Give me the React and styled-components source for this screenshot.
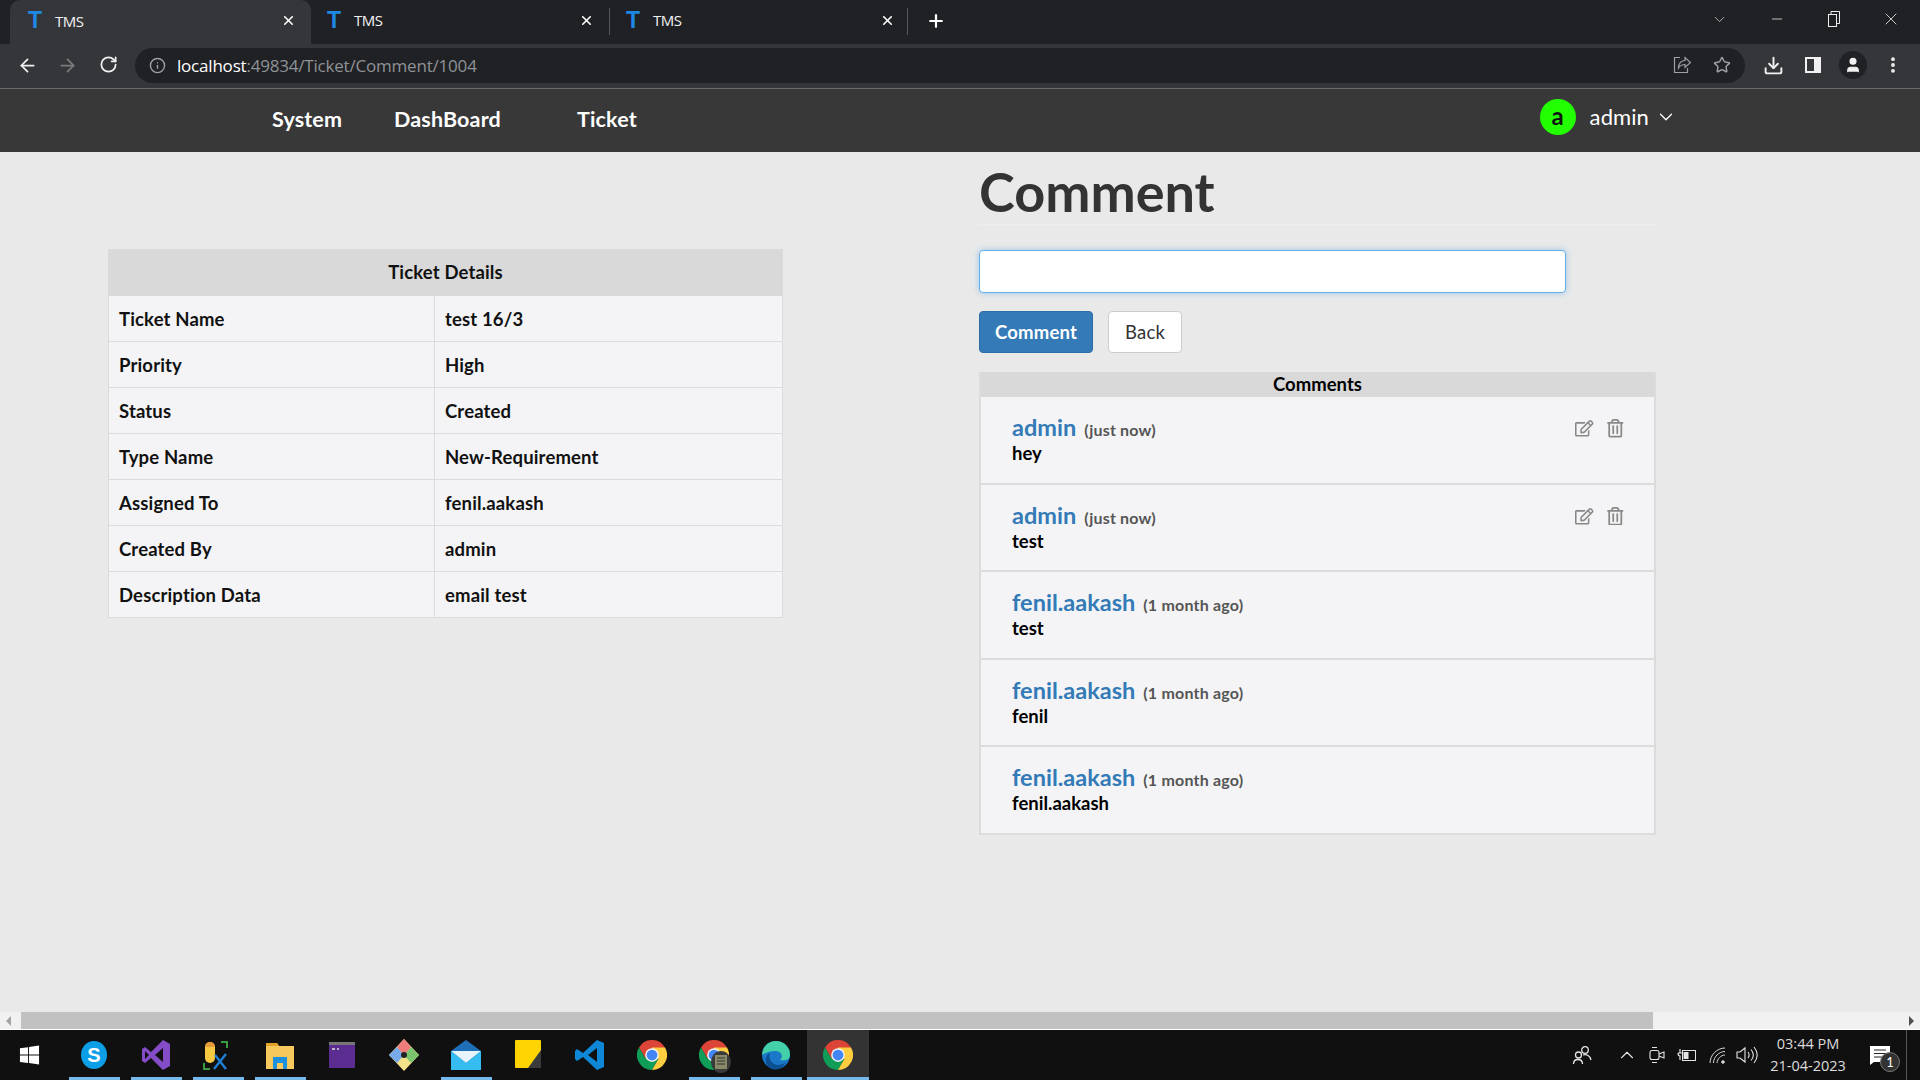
import React from "react";
import styled, { createGlobalStyle } from "styled-components";
import { FaRegEdit, FaRegTrashAlt } from "react-icons/fa";
import { ArrowLeft, ArrowRight, RotateCw, Star, Download, X, Plus, ChevronDown, ChevronUp, Minus, Info, EllipsisVertical, User } from "lucide-react";

const Global = createGlobalStyle`
  html, body { margin: 0; padding: 0; overflow: hidden; }
  body { font-family: "Lato", "Noto Sans", sans-serif; background: #e9e9e9; }
  * { box-sizing: border-box; }
`;

const Screen = styled.div`width: 1920px; height: 1080px; display: flex; flex-direction: column; overflow: hidden;`;

/* browser chrome */
const TabStrip = styled.div`height: 44px; background: #202124; display: flex; padding-left: 10px; align-items: stretch; color: #fff;`;
const Tab = styled.div`
  width: ${p => p.$w}px; display: flex; align-items: center; padding: 0 ${p => p.$pr}px 3px ${p => (p.$sep ? 16 : 18)}px; position: relative;
  background: ${p => (p.$active ? "#35363a" : "transparent")};
  border-radius: ${p => (p.$active ? "10px 10px 0 0" : "0")};
  border-right: ${p => (p.$sep ? "1px solid #55575c" : "0")};
  margin: ${p => (p.$sep ? "8px 0 9px" : "0")};
`;
const FavT = styled.span`font: 700 23px/1 "Liberation Sans", sans-serif; color: #1e88e5; width: 27px;`;
const TabTitle = styled.span`font: 400 15px "Open Sans", sans-serif; flex: 1; letter-spacing: -0.55px; color: #f2f2f2;`;
const NewTab = styled.div`width: 56px; display: flex; align-items: center; justify-content: center; padding-bottom: 3px;`;
const WinControls = styled.div`margin-left: auto; display: flex; align-items: center; padding-bottom: 6px; color: #e8e8e8;`;
const WinBtn = styled.div`width: ${p => p.$w || 57}px; display: flex; justify-content: center;`;

const Toolbar = styled.div`height: 44px; background: #35363a; display: flex; align-items: center; color: #f1f1f1; padding-bottom: 2px;`;
const NavBtns = styled.div`width: 135px; display: flex; padding-left: 7px;`;
const NavBtn = styled.div`width: 40.5px; display: flex; justify-content: center; color: ${p => (p.$dim ? "#7b7c7e" : "#f1f1f1")};`;
const Omnibox = styled.div`width: 1610px; height: 35px; background: #202124; border-radius: 18px; display: flex; align-items: center; padding: 0 3px 0 14px; color: #9aa0a6;`;
const Url = styled.span`font: 400 17px "Open Sans", sans-serif; color: #8f9296; margin-left: 11px; letter-spacing: -0.2px; flex: 1; b { font-weight: 400; color: #fff; }`;
const OmniIcon = styled.div`width: 40px; display: flex; justify-content: center;`;
const ToolIcon = styled.div`width: 40px; display: flex; justify-content: center; margin-left: ${p => p.$ml || 0}px;`;
const ProfileDot = styled.div`width: 28px; height: 28px; border-radius: 50%; background: #202124; display: flex; align-items: center; justify-content: center;`;

/* app navbar */
const NavBar = styled.div`height: 64px; background: #383838; border-top: 1px solid #6a6a6a; display: flex; align-items: center; color: #fff; padding-left: 272px; padding-bottom: 4px;`;
const NavLink = styled.a`font-size: 21.5px; font-weight: 700; width: ${p => p.$w}px; white-space: nowrap; letter-spacing: .15px;`;
const UserBox = styled.div`margin-left: auto; margin-right: 243px; display: flex; align-items: center; margin-top: -4px;`;
const Avatar = styled.div`width: 36px; height: 36px; border-radius: 50%; background: #22ff00; color: #111; display: flex; align-items: center; justify-content: center; font-size: 24px; font-weight: 700; margin-right: 14px; padding-bottom: 3px;`;
const UserName = styled.span`font-size: 22px; font-weight: 400; margin-right: 6px; letter-spacing: .1px;`;

/* page */
const Content = styled.div`flex: 1; display: flex; align-items: flex-start; padding-left: 108px; gap: 196px;`;
const LeftCol = styled.div`width: 675px; padding-top: 97px;`;
const RightCol = styled.div`width: 677px; display: flex; flex-direction: column; align-items: flex-start;`;
const DetailTable = styled.table`width: 100%; border-collapse: collapse; table-layout: fixed; font-size: 18.5px; color: #111; font-weight: 700; letter-spacing: .15px;`;
const HeadCell = styled.th`height: 46px; background: #d9d9d9; font-weight: 700; text-align: center; border: 1px solid #dadada; padding: 0 0 2px;`;
const Cell = styled.td`height: 46px; background: #f4f4f6; border: 1px solid #dcdcdc; padding: 0 10px;`;
const Title = styled.h1`margin: 11px 0 0; width: 100%; font-size: 54px; line-height: 58px; font-weight: 700; color: #333; border-bottom: 1px solid #eee; height: 62px;`;
const TextInput = styled.input`margin-top: 25px; width: 587px; height: 43px; background: #fff; border: 1px solid #66afe9; border-radius: 4px; box-shadow: 0 0 6px rgba(102,175,233,.6); outline: none;`;
const Buttons = styled.div`margin-top: 18px; display: flex; gap: 15px;`;
const Btn = styled.button`height: 42px; width: ${p => p.$w}px; border-radius: 4px; font: ${p => (p.$primary ? 700 : 400)} 18.5px "Lato", sans-serif; letter-spacing: .2px; border: 1px solid ${p => (p.$primary ? "#2e6da4" : "#ccc")}; background: ${p => (p.$primary ? "#337ab7" : "#fff")}; color: ${p => (p.$primary ? "#fff" : "#333")}; padding: 0;`;
const Panel = styled.div`margin-top: 19px; width: 100%; border: 2px solid #dcdcdc; border-top: 0; background: #dcdcdc;`;
const PanelHead = styled.div`height: 25px; line-height: 24px; background: #d9d9d9; text-align: center; font-size: 18.5px; font-weight: 700; color: #000;`;
const CommentRow = styled.div`height: 85.5px; background: #f4f4f6; padding: 16px 30px 0 31px; display: flex; justify-content: space-between; & + & { margin-top: 2px; }`;
const Who = styled.div`display: flex; align-items: baseline; gap: 8px;`;
const Name = styled.a`font-size: 23.5px; font-weight: 700; color: #337ab7; letter-spacing: 0;`;
const When = styled.small`font-size: 16px; font-weight: 700; color: #555; letter-spacing: .2px;`;
const Said = styled.div`font-size: 18.5px; font-weight: 700; color: #000; line-height: 25px;`;
const Actions = styled.div`display: flex; gap: 12px; color: #888; font-size: 18.5px; padding-top: 6px;`;

/* scrollbar + taskbar */
const HScroll = styled.div`height: 18px; background: #f1f1f1; border-bottom: 1px solid #fff; display: flex; align-items: center; justify-content: space-between; padding: 0 6px;`;
const Thumb = styled.div`position: absolute; left: 21px; width: 1632px; height: 17px; background: #c1c1c1;`;
const ArrowTri = styled.div`width: 0; height: 0; border-top: 5px solid transparent; border-bottom: 5px solid transparent; ${p => (p.$left ? "border-right: 5px solid #a3a3a3;" : "border-left: 5px solid #505050;")}`;
const Taskbar = styled.div`height: 50px; background: #101010; display: flex; color: #e4e4e4;`;
const TaskItem = styled.div`
  width: ${p => p.$w || 62}px; height: 50px; display: flex; align-items: center; justify-content: center; position: relative;
  padding-right: ${p => p.$pr || 0}px;
  background: ${p => (p.$active ? "#333" : "transparent")};
  ${p => p.$on && `&::after { content: ""; position: absolute; left: ${p.$active ? 0 : 6}px; right: ${p.$active ? 0 : 5}px; bottom: 0; height: 3px; background: #76b9ed; }`}
`;
const BadgeThumb = styled.span`position: absolute; left: 28px; top: 21px; width: 20px; height: 22px; border-radius: 50%; background: #3a3a3a; display: flex; align-items: center; justify-content: center;`;
const Tray = styled.div`margin-left: auto; display: flex; align-items: center;`;
const TrayIcon = styled.div`width: 30px; display: flex; justify-content: center; margin-right: ${p => p.$mr || 0}px;`;
const Clock = styled.div`width: 92px; text-align: center; font: 400 14.5px/22px "Open Sans", sans-serif; color: #dcdcdc;`;
const Notif = styled.div`width: 52px; display: flex; justify-content: center; position: relative;`;
const NotifBadge = styled.span`position: absolute; left: 26px; top: 6px; width: 20px; height: 20px; border-radius: 50%; background: #333; border: 1px solid #777; font-size: 13px; color: #fff; display: flex; align-items: center; justify-content: center;`;
const Peek = styled.div`width: 14px; height: 50px; border-left: 1px solid #555; margin-left: 0;`;

const Chrome = ({ s = 30 }) => (
  <svg width={s} height={s} viewBox="0 0 48 48">
    <path d="M24 24 L44.8 12 A24 24 0 0 0 3.2 12 L13.6 30 Z" fill="#db4437" />
    <path d="M24 24 L13.6 30 L3.2 12 A24 24 0 0 0 24 48 L34.4 30 Z" fill="#0f9d58" />
    <path d="M24 24 L34.4 30 L24 48 A24 24 0 0 0 44.8 12 L24 12 Z" fill="#ffcd40" />
    <circle cx="24" cy="24" r="11" fill="#f1f1f1" /><circle cx="24" cy="24" r="8.6" fill="#4285f4" />
  </svg>
);

const rows = [["Ticket Name", "test 16/3"], ["Priority", "High"], ["Status", "Created"], ["Type Name", "New-Requirement"], ["Assigned To", "fenil.aakash"], ["Created By", "admin"], ["Description Data", "email test"]];
const comments = [["admin", "just now", "hey", true], ["admin", "just now", "test", true], ["fenil.aakash", "1 month ago", "test"], ["fenil.aakash", "1 month ago", "fenil"], ["fenil.aakash", "1 month ago", "fenil.aakash"]];

export default function App() {
  return (
    <Screen>
      <Global />
      <TabStrip>
        <Tab $active $w={301} $pr={15}><FavT>T</FavT><TabTitle>TMS</TabTitle><X size={15} strokeWidth={2.6} /></Tab>
        <Tab $sep $w={299} $pr={15}><FavT>T</FavT><TabTitle>TMS</TabTitle><X size={15} strokeWidth={2.6} /></Tab>
        <Tab $sep $w={298} $pr={12}><FavT>T</FavT><TabTitle>TMS</TabTitle><X size={15} strokeWidth={2.6} /></Tab>
        <NewTab><Plus size={20} strokeWidth={2.6} /></NewTab>
        <WinControls>
          <WinBtn><ChevronDown size={17} strokeWidth={1} /></WinBtn>
          <WinBtn><Minus size={16} strokeWidth={1.2} /></WinBtn>
          <WinBtn>
            <svg width="14" height="16" viewBox="0 0 14 16" fill="none" stroke="#eee"><rect x="1.5" y="3.5" width="8" height="12" /><path d="M4 3.500V0.500h8.500v12h-3" /></svg>
          </WinBtn>
          <WinBtn $w={58}><X size={20} strokeWidth={1} /></WinBtn>
        </WinControls>
      </TabStrip>
      <Toolbar>
        <NavBtns>
          <NavBtn><ArrowLeft size={21} /></NavBtn>
          <NavBtn $dim><ArrowRight size={21} /></NavBtn>
          <NavBtn><RotateCw size={19} strokeWidth={2.2} /></NavBtn>
        </NavBtns>
        <Omnibox>
          <Info size={17} />
          <Url><b>localhost</b>:49834/Ticket/Comment/1004</Url>
          <OmniIcon>
            <svg width="20" height="20" viewBox="0 0 20 20" fill="none" stroke="#9aa0a6" strokeWidth="1.2"><path d="M8 2.500H2.500v15h13V13" /><path d="M6.500 13c0-5 3-7.500 6.500-7.500V2.500l5.500 5-5.500 5V9.500c-3 0-5 1-6.500 3.500z" /></svg>
          </OmniIcon>
          <OmniIcon><Star size={18} strokeWidth={2} /></OmniIcon>
        </Omnibox>
        <ToolIcon $ml={8}><Download size={21} strokeWidth={2.2} /></ToolIcon>
        <ToolIcon>
          <svg width="18" height="18" viewBox="0 0 18 18"><path fillRule="evenodd" d="M1 1h16v16H1z M3 3v12h7V3z" fill="#f1f1f1" /></svg>
        </ToolIcon>
        <ToolIcon><ProfileDot><User size={18} fill="#f1f1f1" strokeWidth={1.5} /></ProfileDot></ToolIcon>
        <ToolIcon><EllipsisVertical size={20} strokeWidth={2.6} /></ToolIcon>
      </Toolbar>
      <NavBar>
        <NavLink $w={122}>System</NavLink>
        <NavLink $w={183}>DashBoard</NavLink>
        <NavLink $w={80}>Ticket</NavLink>
        <UserBox>
          <Avatar>a</Avatar>
          <UserName>admin</UserName>
          <ChevronDown size={22} strokeWidth={1.4} />
        </UserBox>
      </NavBar>
      <Content>
        <LeftCol>
          <DetailTable>
            <colgroup><col style={{ width: 326 }} /><col /></colgroup>
            <thead><tr><HeadCell colSpan={2}>Ticket Details</HeadCell></tr></thead>
            <tbody>
              {rows.map(([k, v]) => (
                <tr key={k}><Cell>{k}</Cell><Cell>{v}</Cell></tr>
              ))}
            </tbody>
          </DetailTable>
        </LeftCol>
        <RightCol>
          <Title>Comment</Title>
          <TextInput />
          <Buttons>
            <Btn $primary $w={114}>Comment</Btn>
            <Btn $w={74}>Back</Btn>
          </Buttons>
          <Panel>
            <PanelHead>Comments</PanelHead>
            {comments.map(([n, w, t, mine], i) => (
              <CommentRow key={i}>
                <div>
                  <Who><Name>{n}</Name><When>({w})</When></Who>
                  <Said>{t}</Said>
                </div>
                {mine && <Actions><FaRegEdit /><FaRegTrashAlt /></Actions>}
              </CommentRow>
            ))}
          </Panel>
        </RightCol>
      </Content>
      <HScroll><Thumb /><ArrowTri $left /><ArrowTri /></HScroll>
      <Taskbar>
        <TaskItem $w={63} $pr={4}>
          <svg width="21" height="22" viewBox="0 0 22 22" fill="#fff"><path d="M1 4l8.500-1.200V10.500H1z M10.500 2.700L21 1v9.500H10.500z M1 11.500h8.500v8L1 18.300z M10.500 11.500H21V21l-10.500-1.500z" /></svg>
        </TaskItem>
        <TaskItem $on>
          <svg width="30" height="30" viewBox="0 0 30 30"><ellipse cx="15" cy="15" rx="13" ry="14" fill="#0d9ee8" /><text x="15" y="22" textAnchor="middle" fontFamily="Liberation Sans" fontWeight="700" fontSize="20" fill="#fff">S</text></svg>
        </TaskItem>
        <TaskItem $on>
          <svg width="32" height="32" viewBox="0 0 32 32"><path d="M23 1l7 4v22l-7 4-12-12-6 5-3-2V10l3-2 6 5z" fill="#854cc7" /><path d="M23 9v14l-8-7z" fill="#101010" /><path d="M5 12v8l4-4z" fill="#101010" /></svg>
        </TaskItem>
        <TaskItem $on>
          <svg width="32" height="32" viewBox="0 0 32 32" fill="none"><rect x="3" y="3" width="10" height="21" rx="5" fill="#f5c842" /><path d="M3 8a5 5 0 0 1 10 0z" fill="#e59a3c" /><path d="M19 3h6v6M2 24v6h6" stroke="#3a9a40" strokeWidth="2" /><path d="M12 30l12-15M13 16l11 14" stroke="#1f7fd6" strokeWidth="2.400" /></svg>
        </TaskItem>
        <TaskItem $on>
          <svg width="30" height="30" viewBox="0 0 30 30"><path d="M1 3h11l2 3h15v23H1z" fill="#f7c95c" /><path d="M1 3h11l2 3H1z" fill="#e3a32b" /><path d="M8 29V17h14v12h-4v-6h-6v6z" fill="#1e90dc" /></svg>
        </TaskItem>
        <TaskItem>
          <svg width="28" height="28" viewBox="0 0 28 28"><rect x="1" y="1" width="26" height="26" fill="#5c2d91" /><rect x="1" y="1" width="26" height="3" fill="#777" /><path d="M4 8h3M9 8h2" stroke="#ddd" strokeWidth="1.6" /></svg>
        </TaskItem>
        <TaskItem>
          <svg width="32" height="34" viewBox="0 0 32 34"><path d="M16 1l15 16-15 16L1 17z" fill="#f3e28a" /><path d="M1 17l8-8 7 8-7 8z" fill="#78a9e8" /><path d="M31 17l-8-8-7 8 7 8z" fill="#7cc36e" /><path d="M16 1l7 8-7 8-7-8z" fill="#ef7c7c" /><circle cx="16" cy="17" r="3" fill="#222" /></svg>
        </TaskItem>
        <TaskItem $on>
          <svg width="30" height="30" viewBox="0 0 30 30"><path d="M0 11L15 0l15 11v19H0z" fill="#1f6fb8" /><path d="M0 11h30L15 23z" fill="#e8f4fb" /><path d="M0 11l15 12 15-12v19H0z" fill="#35bdf2" /></svg>
        </TaskItem>
        <TaskItem>
          <svg width="28" height="30" viewBox="0 0 28 30"><rect x="1" y="0" width="26" height="28" rx="1" fill="#ffd400" /><path d="M27 10v18H14z" fill="#3b3b3b" /></svg>
        </TaskItem>
        <TaskItem>
          <svg width="32" height="32" viewBox="0 0 32 32"><path d="M23 1l7 3v24l-7 3L9 18l-6 4-2-2v-8l2-2 6 4z" fill="#0e87d6" /><path d="M23 9L14 16l9 7z" fill="#101010" /></svg>
        </TaskItem>
        <TaskItem><Chrome /></TaskItem>
        <TaskItem $on>
          <Chrome />
          <BadgeThumb>
            <svg width="12" height="14" viewBox="0 0 12 14"><rect x="0" y="0" width="12" height="14" fill="#8a8a6a" /><path d="M2 3h8M2 6h8M2 9h8" stroke="#333" /></svg>
          </BadgeThumb>
        </TaskItem>
        <TaskItem $on>
          <svg width="30" height="30" viewBox="0 0 30 30"><circle cx="15" cy="15" r="14" fill="#1b78c8" /><path d="M1 15a14 14 0 0 1 28 0c0 5-6 6-10 5 3-2 3-8-4-9-6 0-11 2-14 4z" fill="#43d0a8" /><path d="M11 29c-8-3-8-14-2-16-2 5 1 11 8 12 3 0 6-1 8-3-3 6-9 9-14 7z" fill="#0c4f93" /></svg>
        </TaskItem>
        <TaskItem $on $active $w={62}><Chrome /></TaskItem>
        <Tray>
          <TrayIcon $mr={15}>
            <svg width="20" height="20" viewBox="0 0 20 20" fill="none" stroke="#e4e4e4" strokeWidth="1.3"><circle cx="13" cy="5" r="3.300" /><circle cx="6.500" cy="10" r="3" /><path d="M1.500 19c0-6 9-6 9 0M11 10c3-1 7 0 8 5" /></svg>
          </TrayIcon>
          <TrayIcon><ChevronUp size={22} strokeWidth={1.2} /></TrayIcon>
          <TrayIcon>
            <svg width="16" height="18" viewBox="0 0 16 18" fill="none" stroke="#e4e4e4" strokeWidth="1.100"><rect x="1" y="4.500" width="9" height="9" rx="2" /><path d="M10 8l5-2v6l-5-2M3 1.500h5M3 16.500h5" /></svg>
          </TrayIcon>
          <TrayIcon>
            <svg width="20" height="14" viewBox="0 0 20 14" fill="none" stroke="#e4e4e4"><rect x="5.500" y="2.500" width="13" height="10" /><rect x="6.500" y="4" width="5" height="7" fill="#e4e4e4" stroke="none" /><path d="M1 5h4M3 1v4M1 5c0 3 2 3 2 3v4" strokeWidth="1.200" /></svg>
          </TrayIcon>
          <TrayIcon>
            <svg width="17" height="17" viewBox="0 0 17 17" fill="none" stroke="#d4d4d4" strokeWidth="1"><path d="M1 16C1 8 8 1 16 1M4.500 16C4.500 10 10 4.500 16 4.500M8 16c0-4 4-8 8-8" /><circle cx="14" cy="15" r="1.300" fill="#d4d4d4" /></svg>
          </TrayIcon>
          <TrayIcon>
            <svg width="22" height="18" viewBox="0 0 22 18" fill="none" stroke="#e4e4e4" strokeWidth="1.100"><path d="M1 6h3l5-4v14l-5-4H1z" /><path d="M12 6c1.500 2 1.500 4 0 6M15 3.500c3 3.500 3 7.500 0 11M18 1c4 5 4 11 0 16" /></svg>
          </TrayIcon>
          <Clock>03:44 PM<br />21-04-2023</Clock>
          <Notif>
            <svg width="20" height="19" viewBox="0 0 20 19"><path d="M0 0h20v16H4l-4 3z" fill="#fff" /><path d="M4 4h12M4 7.500h12M4 11h8" stroke="#222" /></svg>
            <NotifBadge>1</NotifBadge>
          </Notif>
          <Peek />
        </Tray>
      </Taskbar>
    </Screen>
  );
}
